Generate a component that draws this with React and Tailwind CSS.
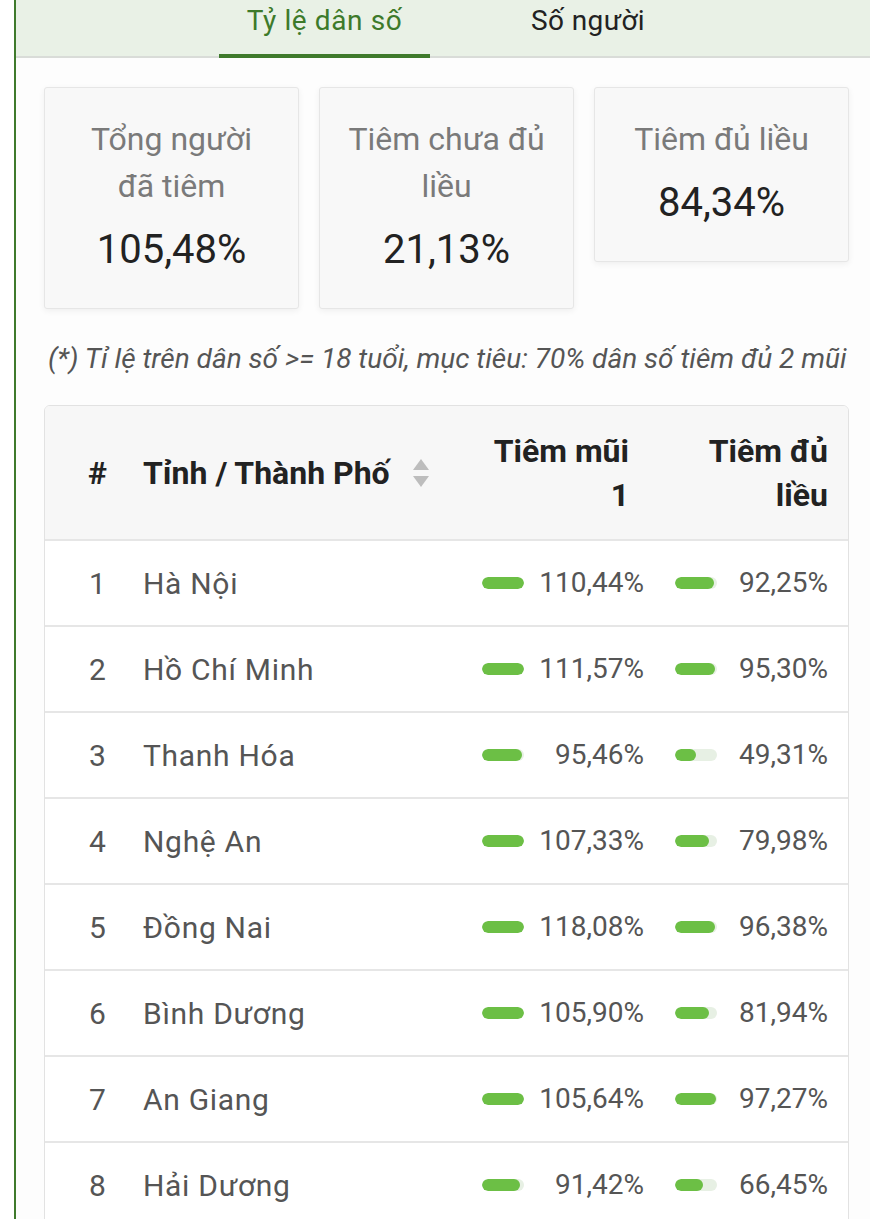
import React from "react";

const rows = [
  { n: 1, name: "Hà Nội", d1: 110.44, d2: 92.25 },
  { n: 2, name: "Hồ Chí Minh", d1: 111.57, d2: 95.3 },
  { n: 3, name: "Thanh Hóa", d1: 95.46, d2: 49.31 },
  { n: 4, name: "Nghệ An", d1: 107.33, d2: 79.98 },
  { n: 5, name: "Đồng Nai", d1: 118.08, d2: 96.38 },
  { n: 6, name: "Bình Dương", d1: 105.9, d2: 81.94 },
  { n: 7, name: "An Giang", d1: 105.64, d2: 97.27 },
  { n: 8, name: "Hải Dương", d1: 91.42, d2: 66.45 },
];

const fmt = (v) => v.toFixed(2).replace(".", ",") + "%";

function Bar({ value }) {
  const w = Math.min(value, 100);
  return (
    <div className="h-[12px] w-[42px] rounded-full bg-[#e7f0e4] overflow-hidden shrink-0">
      <div className="h-full rounded-full bg-[#6cbf45]" style={{ width: `${w}%` }} />
    </div>
  );
}

function StatCard({ label, value }) {
  return (
    <div className="flex-1 bg-[#f8f8f8] border border-[#e6e6e6] rounded-[3px] shadow-[0_2px_6px_rgba(0,0,0,0.06)] pt-[28px] pb-[33px] px-2 text-center">
      <div className="text-[32px] leading-[47px] text-[#7a7a7a]">{label}</div>
      <div className="mt-[15px] text-[40px] leading-[50px] text-[#222]">{value}</div>
    </div>
  );
}

export default function App() {
  return (
    <div className="min-h-[1219px] bg-white" style={{ fontFamily: "Roboto, 'Noto Sans', sans-serif" }}>
      <div className="ml-[14px] border-l-[2px] border-[#3f7a2c] min-h-[1219px] bg-[#fdfdfd]">
        <div className="relative h-[58px] bg-[#e9f1e6] border-b-[2px] border-[#d9dcd8] flex">
          <div className="ml-[203px] w-[211px] relative flex justify-center pt-[2px]">
            <span className="text-[28px] leading-[38px] tracking-[0.6px] text-[#3d7a2a]">Tỷ lệ dân số</span>
            <div className="absolute left-0 right-0 bottom-[-2px] h-[4px] bg-[#3f7a2c]" />
          </div>
          <div className="w-[316px] flex justify-center pt-[2px]">
            <span className="text-[28px] leading-[38px] tracking-[0.4px] text-[#222]">Số người</span>
          </div>
        </div>

        <div className="pl-[28px] pr-[21px] pt-[29px]">
          <div className="flex items-start gap-[20px]">
            <StatCard label={<>Tổng người<br />đã tiêm</>} value="105,48%" />
            <StatCard label={<>Tiêm chưa đủ<br />liều</>} value="21,13%" />
            <StatCard label="Tiêm đủ liều" value="84,34%" />
          </div>

          <p className="mt-[30px] pl-[4px] italic text-[28px] leading-[40px] text-[#555] whitespace-nowrap">
            (*) Tỉ lệ trên dân số &gt;= 18 tuổi, mục tiêu: 70% dân số tiêm đủ 2 mũi
          </p>

          <div className="mt-[26px] border border-[#e2e2e2] rounded-t-[6px] overflow-hidden bg-white">
            <div className="flex items-center h-[133px] bg-[#f7f7f7] font-bold text-[32px] text-[#222]">
              <div className="w-[98px] pl-[43px]">#</div>
              <div className="flex-1 flex items-center">
                <span>Tỉnh / Thành Phố</span>
                <svg className="ml-[22px]" width="18" height="28" viewBox="0 0 18 28">
                  <polygon points="9,0 17,11 1,11" fill="#bdbdbd" />
                  <polygon points="1,17 17,17 9,28" fill="#bdbdbd" />
                </svg>
              </div>
              <div className="w-[194px] pr-[31px] text-right leading-[44px]">Tiêm mũi<br />1</div>
              <div className="w-[188px] pr-[20px] text-right leading-[44px]">Tiêm đủ<br />liều</div>
            </div>
            {rows.map((r) => (
              <div key={r.n} className="flex items-center h-[86px] border-t-[2px] border-[#e6e6e6] text-[#555]">
                <div className="w-[98px] pl-[44px] text-[30px]">{r.n}</div>
                <div className="flex-1 text-[30px] tracking-[0.7px]">{r.name}</div>
                <div className="w-[194px] pl-[16px] pr-[16px] flex items-center justify-between">
                  <Bar value={r.d1} />
                  <span className="text-[28px]">{fmt(r.d1)}</span>
                </div>
                <div className="w-[188px] pl-[15px] pr-[20px] flex items-center justify-between">
                  <Bar value={r.d2} />
                  <span className="text-[28px]">{fmt(r.d2)}</span>
                </div>
              </div>
            ))}
          </div>
        </div>
      </div>
    </div>
  );
}
